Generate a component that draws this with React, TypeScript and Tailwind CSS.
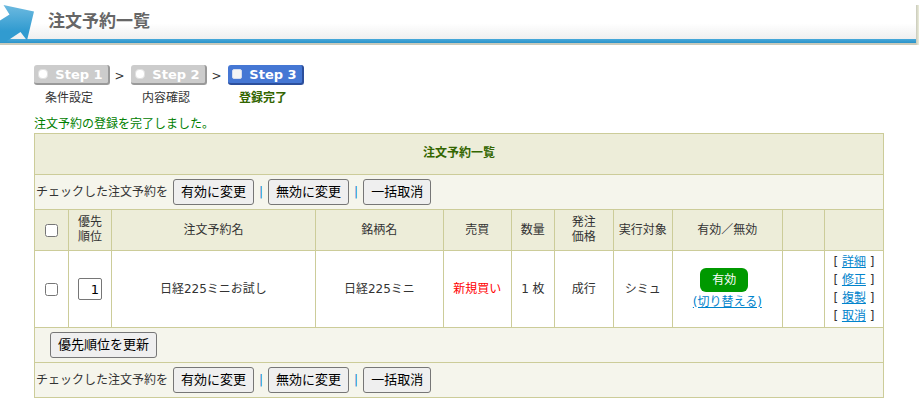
import React, { useState } from 'react';

const steps = [
  { id: 1, label: '条件設定', active: false },
  { id: 2, label: '内容確認', active: false },
  { id: 3, label: '登録完了', active: true },
];

const rowActions = ['詳細', '修正', '複製', '取消'];

const cell = 'border border-[#cc9] p-0 text-center font-normal';
const linkClass = 'text-[#0083cc] underline';

function FormButton({ children }: { children: React.ReactNode }) {
  return (
    <button
      type="button"
      className="h-[26px] rounded-[3px] border border-[#767676] bg-[#efefef] px-[7px] text-[13px] leading-4 text-black"
    >
      {children}
    </button>
  );
}

function PageHeader() {
  return (
    <header className="flex h-[45px]">
      <div className="flex grow flex-col">
        <div className="flex grow items-start bg-linear-to-b from-white from-60% to-[#efefef]">
          <svg className="relative -mb-1 h-[42px] w-[35px] shrink-0" viewBox="0 0 35 42" aria-hidden="true">
            <defs>
              <linearGradient id="arrow" x1="0" y1="0" x2="0" y2="1">
                <stop offset="0" stopColor="#6dbae0" />
                <stop offset="0.7" stopColor="#319bd0" />
              </linearGradient>
            </defs>
            <path d="M3.500 5 L34 11.500 L27 40.500 L20.500 32 L7 41 V42 H0 V20.500 L9.500 14.500 Z" fill="url(#arrow)" />
          </svg>
          <h1 className="ml-[13px] mt-[9px] text-[17px] font-bold leading-6 text-[#666]">注文予約一覧</h1>
        </div>
        <div className="h-1 bg-linear-to-b from-[#47a9da] to-[#2b93c9]" />
        <div className="h-0.5 bg-[#c9cabb]" />
      </div>
      <div className="mt-[5px] w-[3px] bg-linear-to-r from-[#c9cabb] to-[#ecedda]" />
    </header>
  );
}

function StepNav() {
  return (
    <ol className="flex">
      {steps.map((step) => (
        <li key={step.id} className="flex">
          {step.id > 1 && <span className="w-[21px] pr-0.5 pt-0.5 text-center leading-[18px]">&gt;</span>}
          <div className="w-[76px]">
            <div
              className={
                step.active
                  ? 'flex h-5 items-center rounded-[3px] border-b-2 border-r-2 border-[#2c4f9c] bg-[#4577d4] pl-1'
                  : 'flex h-5 items-center rounded-[3px] border-b-2 border-r-2 border-[#999] bg-[#ccc] pl-1'
              }
            >
              <span
                className={
                  step.active
                    ? 'size-[10px] rounded-[2px] border border-[#d4dcef] bg-[#f4f4f4]'
                    : 'size-[10px] rounded-[4px] border border-[#e0e0e0] bg-white'
                }
              />
              <span
                className={
                  step.active
                    ? 'grow pl-0.5 pt-0.5 text-center text-[13px] font-bold leading-4 text-white'
                    : 'grow pl-0.5 pt-0.5 text-center text-[13px] font-bold leading-4 text-white'
                }
              >
                Step {step.id}
              </span>
            </div>
            <div
              className={
                step.active
                  ? 'pr-1.5 pt-1 text-center font-bold leading-[18px] text-[#360]'
                  : 'pr-1.5 pt-1 text-center leading-[18px]'
              }
            >
              {step.label}
            </div>
          </div>
        </li>
      ))}
    </ol>
  );
}

function BulkRow() {
  return (
    <tr className="h-[35px] bg-[#f5f5ec]">
      <td colSpan={11} className="border border-[#cc9] p-0">
        <div className="flex items-center gap-[5px] pl-px">
          <span>チェックした注文予約を</span>
          <FormButton>有効に変更</FormButton>
          <span className="text-[#0083cc]">|</span>
          <FormButton>無効に変更</FormButton>
          <span className="text-[#0083cc]">|</span>
          <FormButton>一括取消</FormButton>
        </div>
      </td>
    </tr>
  );
}

function OrderTable() {
  const [allChecked, setAllChecked] = useState(false);
  const [priority, setPriority] = useState('1');

  return (
    <table className="w-full table-fixed border-collapse border border-[#cc9]">
      <colgroup>
        <col className="w-[34px]" />
        <col className="w-[43px]" />
        <col />
        <col className="w-[128px]" />
        <col className="w-[68px]" />
        <col className="w-[43px]" />
        <col className="w-[59px]" />
        <col className="w-[59px]" />
        <col className="w-[110px]" />
        <col className="w-[42px]" />
        <col className="w-[59px]" />
      </colgroup>
      <tbody>
        <tr className="h-[41px] bg-[#ededd9]">
          <th colSpan={11} className="border border-[#cc9] p-0 pb-0.5 text-center font-bold text-[#360]">
            注文予約一覧
          </th>
        </tr>
        <BulkRow />
        <tr className="h-[41px] bg-[#ededd9] leading-[15px]">
          <th className={cell}>
            <input
              type="checkbox"
              aria-label="すべて選択"
              className="mx-auto block size-[13px]"
              checked={allChecked}
              onChange={(e) => setAllChecked(e.target.checked)}
            />
          </th>
          <th className={cell}>優先<br />順位</th>
          <th className={cell}>注文予約名</th>
          <th className={cell}>銘柄名</th>
          <th className={cell}>売買</th>
          <th className={cell}>数量</th>
          <th className={cell}>発注<br />価格</th>
          <th className={cell}>実行対象</th>
          <th className={cell}>有効／無効</th>
          <th className={cell} />
          <th className={cell} />
        </tr>
        <tr className="h-[77px] bg-white">
          <td className={cell}>
            <input
              type="checkbox"
              aria-label="日経225ミニお試し"
              className="mx-auto block size-[13px]"
              checked={allChecked}
              onChange={(e) => setAllChecked(e.target.checked)}
            />
          </td>
          <td className={cell}>
            <input
              type="text"
              aria-label="優先順位"
              value={priority}
              onChange={(e) => setPriority(e.target.value)}
              className="mx-auto block h-[22px] w-6 rounded-[2px] border border-[#767676] bg-white px-0.5 text-right text-[13px] text-black"
            />
          </td>
          <td className={cell}>日経225ミニお試し</td>
          <td className={cell}>日経225ミニ</td>
          <td className={`${cell} text-[#f00]`}>新規買い</td>
          <td className={cell}>1 枚</td>
          <td className={cell}>成行</td>
          <td className={cell}>シミュ</td>
          <td className={cell}>
            <div className="flex justify-center pr-1.5 pt-0.5">
              <span className="h-6 w-12 rounded-[6px] bg-[#090] leading-6 text-white">有効</span>
            </div>
            <a href="#toggle" className={`${linkClass} block leading-5`}>(切り替える)</a>
          </td>
          <td className={cell} />
          <td className={cell}>
            {rowActions.map((action) => (
              <div key={action}>
                [ <a href="#action" className={linkClass}>{action}</a> ]
              </div>
            ))}
          </td>
        </tr>
        <tr className="h-[35px] bg-[#f5f5ec]">
          <td colSpan={11} className="border border-[#cc9] p-0">
            <div className="flex pl-[15px]">
              <FormButton>優先順位を更新</FormButton>
            </div>
          </td>
        </tr>
        <BulkRow />
      </tbody>
    </table>
  );
}

export default function App() {
  return (
    <div className="bg-white font-['DejaVu_Sans','Noto_Sans_CJK_JP',sans-serif] text-[12px] leading-[18px] text-[#333]">
      <PageHeader />
      <main className="pb-2 pl-[34px] pr-[35px] pt-5">
        <StepNav />
        <p className="mt-2 text-[#008000]">注文予約の登録を完了しました。</p>
        <OrderTable />
      </main>
    </div>
  );
}
